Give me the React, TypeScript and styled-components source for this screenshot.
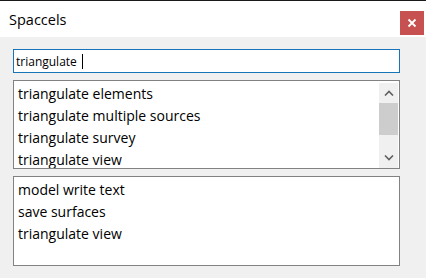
import styled, { createGlobalStyle } from "styled-components";

const GlobalStyle = createGlobalStyle`
  html, body {
    margin: 0;
    padding: 0;
    background: #f0f0f0;
  }
  * {
    box-sizing: border-box;
  }
`;

const Window = styled.div`
  width: 426px;
  height: 278px;
  background: #f0f0f0;
  border-top: 1px solid #1a1a1a;
  font-family: "Open Sans", "Noto Sans", sans-serif;
  color: #000;
  display: flex;
  flex-direction: column;
`;

const TitleBar = styled.div`
  height: 36px;
  background: #fff;
  display: flex;
  align-items: center;
  justify-content: space-between;
  padding: 0 2px 0 9px;
`;

const Title = styled.span`
  font-size: 14.5px;
  margin-top: 1px;
`;

const CloseButton = styled.button`
  width: 24px;
  height: 24px;
  margin-top: 7px;
  border: none;
  padding: 0;
  background: #c75050;
  display: flex;
  align-items: center;
  justify-content: center;
`;

const Body = styled.div`
  padding: 12px 13px 0 13px;
  display: flex;
  flex-direction: column;
  gap: 7px;
  width: 413px;
`;

const SearchBox = styled.div`
  height: 24px;
  border: 1px solid #1873b9;
  background: #fff;
  display: flex;
  align-items: center;
  padding: 0 2px;
  font-size: 12px;
`;

const Caret = styled.span`
  display: inline-block;
  width: 1px;
  height: 15px;
  background: #000;
  margin-left: 5px;
`;

const ListBox = styled.div<{ $height: number }>`
  height: ${(p) => p.$height}px;
  border: 1px solid #828282;
  background: #fff;
  display: flex;
  overflow: hidden;
`;

const Items = styled.div`
  flex: 1;
  padding: 2px 4px;
`;

const Item = styled.div`
  height: 22px;
  line-height: 22px;
  font-size: 14px;
  white-space: nowrap;
`;

const ScrollBar = styled.div`
  width: 19px;
  margin: 2px 1px 0 0;
  background: #f0f0f0;
  display: flex;
  flex-direction: column;
  align-items: center;
`;

const Arrow = styled.div`
  height: 20px;
  width: 19px;
  display: flex;
  align-items: center;
  justify-content: center;
`;

const Thumb = styled.div`
  width: 19px;
  height: 32px;
  background: #cdcdcd;
`;

const Track = styled.div`
  flex: 1;
`;

const Chevron = ({ up }: { up?: boolean }) => (
  <svg width="10" height="6" viewBox="0 0 10 6">
    <path
      d={up ? "M1 5.5 L5 1.5 L9 5.5" : "M1 0.5 L5 4.5 L9 0.5"}
      fill="none"
      stroke="#606060"
      strokeWidth="1.6"
    />
  </svg>
);

const matches = [
  "triangulate elements",
  "triangulate multiple sources",
  "triangulate survey",
  "triangulate view",
];

const recent = ["model write text", "save surfaces", "triangulate view"];

export default function App() {
  return (
    <>
      <GlobalStyle />
      <Window>
        <TitleBar>
          <Title>Spaccels</Title>
          <CloseButton>
            <svg width="10" height="10" viewBox="0 0 10 10">
              <path d="M1.5 1.5 L8.5 8.5 M8.5 1.5 L1.5 8.5" stroke="#fff" strokeWidth="1.8" />
            </svg>
          </CloseButton>
        </TitleBar>
        <Body>
          <SearchBox>
            triangulate
            <Caret />
          </SearchBox>
          <ListBox $height={89}>
            <Items>
              {matches.map((m) => (
                <Item key={m}>{m}</Item>
              ))}
            </Items>
            <ScrollBar>
              <Arrow>
                <Chevron up />
              </Arrow>
              <Thumb />
              <Track />
              <Arrow>
                <Chevron />
              </Arrow>
            </ScrollBar>
          </ListBox>
          <ListBox $height={90}>
            <Items>
              {recent.map((m) => (
                <Item key={m}>{m}</Item>
              ))}
            </Items>
          </ListBox>
        </Body>
      </Window>
    </>
  );
}
